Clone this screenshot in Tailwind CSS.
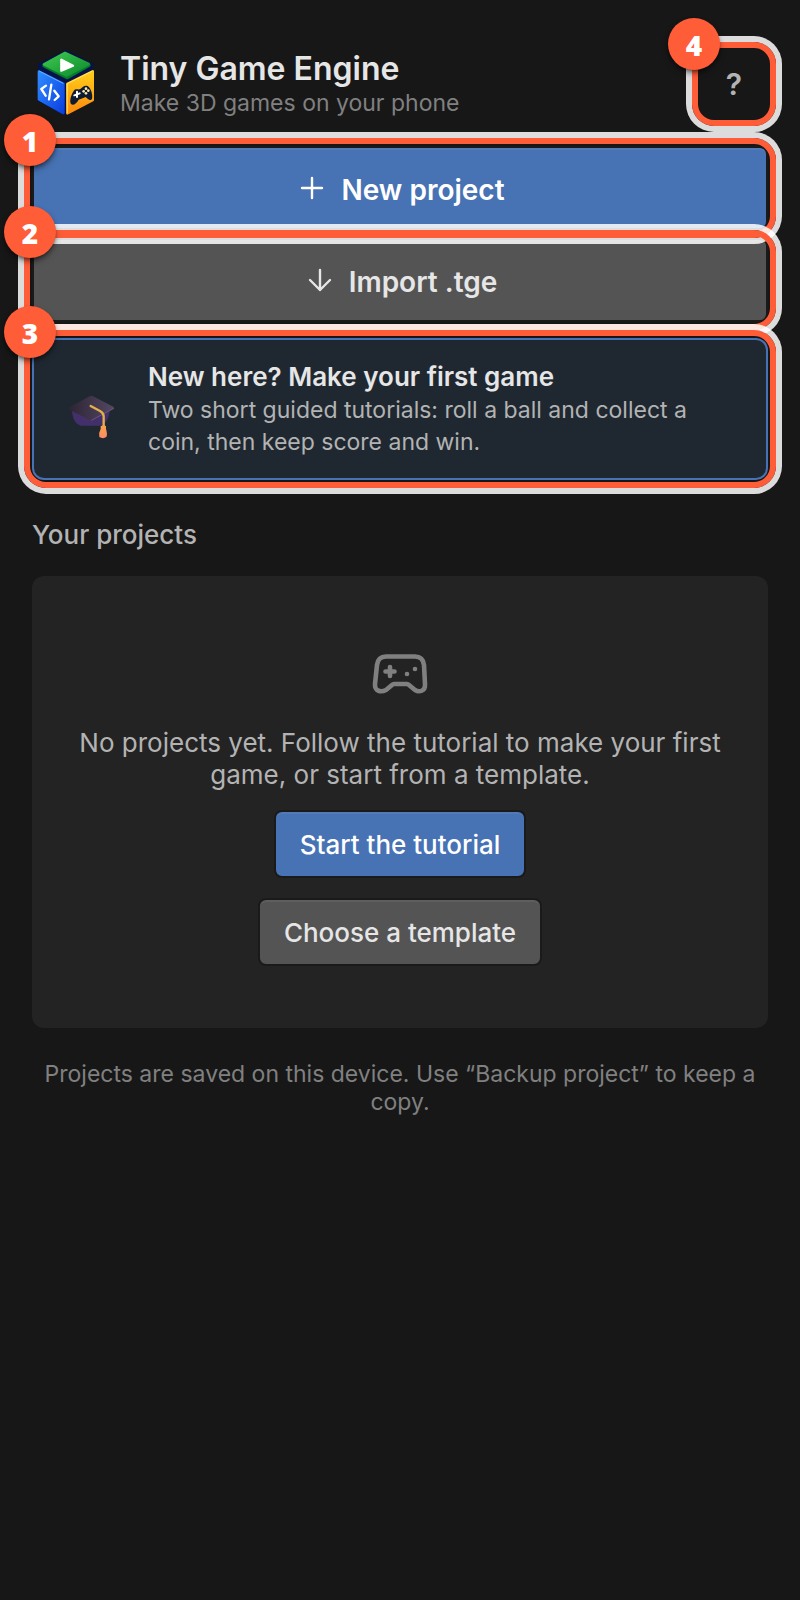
<!DOCTYPE html>
<html lang="en">
<head>
  <meta charset="UTF-8" />
  <meta name="viewport" content="width=device-width, initial-scale=1" />
  <title>Tiny Game Engine</title>
  <script src="https://cdn.jsdelivr.net/npm/@tailwindcss/browser@4"></script>
</head>
<body class="bg-[#171717] min-h-screen font-['Inter',sans-serif] text-[#e6e6e6]">
  <main class="px-8 pt-[50px] pb-8">

    <!-- Header -->
    <header class="flex items-center gap-5">
      <svg class="size-[68px] shrink-0" viewBox="6 30 204 204" role="img" aria-label="Tiny Game Engine logo">
        <defs>
          <linearGradient id="green" x1="0" y1="0" x2="1" y2="1">
            <stop offset="0" stop-color="#3fc94f" />
            <stop offset="1" stop-color="#0b8a2c" />
          </linearGradient>
          <linearGradient id="blue" x1="0" y1="0" x2="1" y2="1">
            <stop offset="0" stop-color="#2f8bff" />
            <stop offset="1" stop-color="#0a3fe0" />
          </linearGradient>
          <linearGradient id="yellow" x1="0" y1="0" x2="0" y2="1">
            <stop offset="0" stop-color="#ffcf1a" />
            <stop offset="1" stop-color="#ff8a0c" />
          </linearGradient>
        </defs>
        <path d="M108 32L188 72V182L108 224L26 182V72Z" fill="#06134a" stroke="#06134a" stroke-width="4" stroke-linejoin="round" />
        <path d="M42 77L105 43L177 76L112 113Z" fill="#067a28" stroke="#067a28" stroke-width="10" stroke-linejoin="round" />
        <path d="M42 73L105 39L176 72L110 107Z" fill="url(#green)" stroke="url(#green)" stroke-width="8" stroke-linejoin="round" />
        <path d="M27 95L100 131V219L27 178Z" fill="url(#blue)" stroke="url(#blue)" stroke-width="8" stroke-linejoin="round" />
        <path d="M29 94L99 130" stroke="#5cb4ff" stroke-width="3" stroke-linecap="round" fill="none" />
        <path d="M188 94L112 132V220L188 180Z" fill="url(#yellow)" stroke="url(#yellow)" stroke-width="8" stroke-linejoin="round" />
        <path d="M112 219V131L186 94" stroke="#ffe36a" stroke-width="3" stroke-linecap="round" stroke-linejoin="round" fill="none" />
        <path d="M94 59V92L129 77Z" fill="#fff" stroke="#fff" stroke-width="7" stroke-linejoin="round" />
        <path d="M48 137L34 147L47 167M73 152L86 169L74 180M64 134L57 178" fill="none" stroke="#fff" stroke-width="7" stroke-linecap="round" stroke-linejoin="round" />
        <path d="M131 153C137 144 145 151 151 147C157 143 162 134 173 138C183 144 189 166 186 176C182 185 173 177 167 171L146 179C140 189 130 199 123 192C117 182 125 162 131 153Z" fill="#0e1b33" />
        <path d="M141 155V171M133 166L149 160" stroke="#fff" stroke-width="6" stroke-linecap="round" />
        <g fill="#ffe9a8">
          <circle cx="168" cy="146" r="4" />
          <circle cx="161" cy="154" r="4" />
          <circle cx="175" cy="152" r="4" />
          <circle cx="168" cy="160" r="4" />
        </g>
      </svg>
      <div class="flex-1 min-w-0">
        <h1 class="mb-px text-[32px] leading-[38px] font-semibold">Tiny Game Engine</h1>
        <p class="text-[23px] leading-[29px] text-[#808080]">Make 3D games on your phone</p>
      </div>
      <div class="relative shrink-0">
        <button type="button" aria-label="Help" class="block size-[68px] text-[30px] font-semibold text-[#b3b3b3]">?</button>
        <div class="absolute z-10 -inset-2 rounded-[22px] border-6 border-[#ff5c38] ring-6 ring-white/85 pointer-events-none"></div>
        <span class="absolute z-20 -top-8 -left-8 size-[52px] rounded-full bg-[#ff5c38] shadow-md shadow-black/50 flex items-center justify-center pt-px font-['Open_Sans',sans-serif] text-[28px] font-extrabold text-white">4</span>
      </div>
    </header>

    <!-- Actions -->
    <div class="mt-7 flex flex-col gap-2">
      <div class="relative">
        <button type="button" class="w-full h-[84px] pt-1 rounded-lg border-2 border-[#1a1a1a] bg-[#4772b3] inset-shadow-[0_2px_0_rgba(255,255,255,0.06)] text-[28px] font-semibold text-white flex items-center justify-center gap-4">
          <svg class="w-[30px] h-7" viewBox="0 0 30 28" fill="none" stroke="currentColor" stroke-width="2.4" stroke-linecap="round" aria-hidden="true">
            <path d="M17 2V22M7 12H27" />
          </svg>
          New project
        </button>
        <div class="absolute z-10 -inset-2 rounded-[22px] border-6 border-[#ff5c38] ring-6 ring-white/85 pointer-events-none"></div>
        <span class="absolute z-20 -top-8 -left-7 size-[52px] rounded-full bg-[#ff5c38] shadow-md shadow-black/50 flex items-center justify-center pt-px font-['Open_Sans',sans-serif] text-[28px] font-extrabold text-white">1</span>
      </div>
      <div class="relative">
        <button type="button" class="w-full h-[84px] pt-1 rounded-lg border-2 border-[#1a1a1a] bg-[#545454] inset-shadow-[0_2px_0_rgba(255,255,255,0.06)] text-[28px] font-semibold flex items-center justify-center gap-4">
          <svg class="w-[30px] h-7" viewBox="0 0 30 28" fill="none" stroke="currentColor" stroke-width="2.4" stroke-linecap="round" stroke-linejoin="round" aria-hidden="true">
            <path d="M17 2V22M7 12L17 22L27 12" />
          </svg>
          Import .tge
        </button>
        <div class="absolute z-10 -inset-2 rounded-[22px] border-6 border-[#ff5c38] ring-6 ring-white/85 pointer-events-none"></div>
        <span class="absolute z-20 -top-8 -left-7 size-[52px] rounded-full bg-[#ff5c38] shadow-md shadow-black/50 flex items-center justify-center pt-px font-['Open_Sans',sans-serif] text-[28px] font-extrabold text-white">2</span>
      </div>
    </div>

    <!-- Tutorial card -->
    <div class="relative mt-4">
      <button type="button" class="w-full rounded-xl border-2 border-[#4772b3] bg-[#1f2831] pl-[34px] pr-8 pt-[21px] pb-5 flex items-center gap-8 text-left">
        <svg class="w-12 h-14 shrink-0 overflow-visible" viewBox="24 3 144 168" aria-hidden="true">
          <defs>
            <linearGradient id="board" x1="0" y1="0" x2="1" y2="0">
              <stop offset="0" stop-color="#2b2433" />
              <stop offset="1" stop-color="#554763" />
            </linearGradient>
            <linearGradient id="tassel" x1="0" y1="0" x2="0" y2="1">
              <stop offset="0" stop-color="#f5a64a" />
              <stop offset="1" stop-color="#ff8a66" />
            </linearGradient>
          </defs>
          <path d="M36 90C38 112 44 128 62 134H120C138 128 148 112 149 88L92 70Z" fill="#43306a" />
          <path d="M26 80L89 46Q94 43 99 46L160 77Q164 80 160 83L98 116Q93 119 88 116L28 86Q22 83 26 80Z" fill="url(#board)" />
          <path d="M94 118L162 82" stroke="#75668a" stroke-width="2" fill="none" />
          <path d="M92 75L120 90Q131 96 131 106V136" stroke="#e3b04b" stroke-width="7" stroke-linecap="round" fill="none" />
          <path d="M122 136Q131 129 138 136V144Q143 160 139 168Q129 175 118 168Q115 156 122 144Z" fill="url(#tassel)" />
        </svg>
        <span class="flex-1 min-w-0">
          <strong class="block mb-px text-[26px] leading-8 font-semibold">New here? Make your first game</strong>
          <span class="block text-[23px] leading-8 text-[#b3b3b3]">Two short guided tutorials: roll a ball and collect a coin, then keep score and win.</span>
        </span>
      </button>
      <div class="absolute z-10 -inset-2 rounded-[22px] border-6 border-[#ff5c38] ring-6 ring-white/85 pointer-events-none"></div>
      <span class="absolute z-20 -top-8 -left-7 size-[52px] rounded-full bg-[#ff5c38] shadow-md shadow-black/50 flex items-center justify-center pt-px font-['Open_Sans',sans-serif] text-[28px] font-extrabold text-white">3</span>
    </div>

    <!-- Projects -->
    <h2 class="mt-[39px] text-[26px] leading-8 font-medium text-[#b3b3b3]">Your projects</h2>
    <section class="mt-[25px] rounded-xl bg-[#232323] px-10 pt-16 pb-[62px] flex flex-col items-center text-center">
      <svg class="size-16" viewBox="0 0 64 64" fill="none" stroke="#808080" stroke-width="4.6" stroke-linecap="round" stroke-linejoin="round" aria-hidden="true">
        <path d="M18 16.500H47Q55 16.500 56 25L57 44C57.500 51.500 51 52.500 47 50L41 45Q40 44 39 44H26Q25 44 24 45L18 50C13 52.500 6.500 51.500 7 44L9 25Q10 16.500 18 16.500Z" />
        <path d="M22 27V36M17.500 31.500H26.500" />
        <circle cx="39" cy="34" r="2.300" fill="#808080" stroke="none" />
        <circle cx="47" cy="29" r="2.300" fill="#808080" stroke="none" />
      </svg>
      <p class="mt-[23px] text-[26px] leading-8 text-[#b3b3b3]">No projects yet. Follow the tutorial to make your first game, or start from a template.</p>
      <button type="button" class="mt-[19px] h-[68px] px-6 rounded-lg border-2 border-[#1a1a1a] bg-[#4772b3] inset-shadow-[0_2px_0_rgba(255,255,255,0.06)] text-[26px] font-medium text-white">Start the tutorial</button>
      <button type="button" class="mt-5 h-[68px] px-6 rounded-lg border-2 border-[#1a1a1a] bg-[#545454] inset-shadow-[0_2px_0_rgba(255,255,255,0.06)] text-[26px] font-medium">Choose a template</button>
    </section>

    <p class="mt-8 text-center text-[23px] leading-7 text-[#808080]">Projects are saved on this device. Use “Backup project” to keep a copy.</p>
  </main>
</body>
</html>
